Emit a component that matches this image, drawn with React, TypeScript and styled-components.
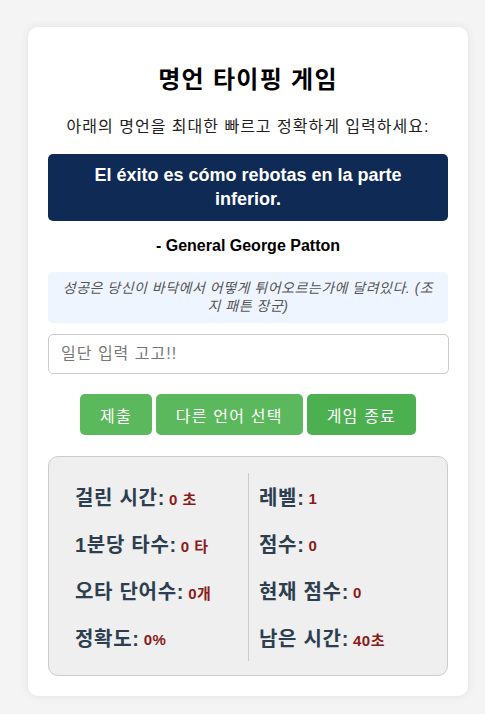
import React from "react";
import styled, { createGlobalStyle } from "styled-components";

const GlobalStyle = createGlobalStyle`
  html, body { margin: 0; padding: 0; background: #f4f4f4; }
  body {
    font-family: "Liberation Sans", Arial, "Noto Sans CJK KR", sans-serif;
    padding: 27px 0 19px 28px;
  }
  * { box-sizing: border-box; }
`;

const Card = styled.div`
  width: 440px;
  background: #fff;
  border-radius: 10px;
  box-shadow: 0 0 10px rgba(0, 0, 0, 0.08);
  padding: 20px 20px 20px;
  text-align: center;
`;

const Title = styled.h1`
  margin: 17px 0 0;
  font-size: 24px;
  line-height: 32px;
  font-weight: bold;
  letter-spacing: 1.3px;
  color: #000;
`;

const Subtitle = styled.p`
  margin: 19px 0 0;
  font-size: 16px;
  line-height: 24px;
  letter-spacing: 1px;
  color: #222;
`;

const QuoteBox = styled.div`
  margin-top: 15px;
  background: #0f2a55;
  color: #fff;
  border-radius: 5px;
  padding: 10px 20px;
  font-size: 18px;
  font-weight: bold;
  line-height: 23.5px;
`;

const Author = styled.p`
  margin: 13px 0 0;
  font-size: 16px;
  line-height: 24px;
  font-weight: bold;
  color: #000;
`;

const Translation = styled.div`
  margin-top: 14px;
  background: #eef5ff;
  border-radius: 5px;
  padding: 8px 10px;
  font-size: 14px;
  line-height: 17.5px;
  font-style: italic;
  letter-spacing: 0.5px;
  word-break: break-all;
  color: #555;
`;

const Input = styled.input`
  display: block;
  margin-top: 11px;
  width: 401px;
  height: 40px;
  border: 1px solid #ccc;
  border-radius: 5px;
  padding: 0 12px;
  font-size: 16px;
  letter-spacing: 1px;
  font-family: inherit;
  color: #333;
  outline: none;
  &::placeholder { color: #777; }
`;

const ButtonRow = styled.div`
  margin-top: 20px;
  display: flex;
  justify-content: center;
  gap: 4px;
`;

const Button = styled.button<{ $dark?: boolean }>`
  height: 41px;
  padding: 0 20px;
  border: none;
  border-radius: 5px;
  background: ${(p) => (p.$dark ? "#4caf50" : "#5cb85c")};
  color: #fff;
  font-size: 16px;
  letter-spacing: 1.2px;
  font-family: inherit;
  cursor: pointer;
`;

const Stats = styled.div`
  margin-top: 21px;
  background: #efefef;
  border: 1px solid #ccc;
  border-radius: 10px;
  padding: 16px 0 14px;
  display: grid;
  grid-template-columns: 199px 1fr;
  text-align: left;
`;

const Column = styled.div<{ $right?: boolean }>`
  padding-left: ${(p) => (p.$right ? "10px" : "26px")};
  border-left: ${(p) => (p.$right ? "1px solid #ccc" : "none")};
`;

const Row = styled.div`
  height: 47px;
  display: flex;
  align-items: center;
  gap: 4px;
  white-space: nowrap;
`;

const Label = styled.span`
  font-size: 20px;
  font-weight: bold;
  letter-spacing: 0.7px;
  color: #2c3e50;
`;

const Value = styled.span`
  font-size: 15px;
  font-weight: bold;
  letter-spacing: 0.5px;
  color: #8b1a1a;
  padding-top: 3px;
`;

const left = [
  ["걸린 시간:", "0 초"],
  ["1분당 타수:", "0 타"],
  ["오타 단어수:", "0개"],
  ["정확도:", "0%"],
];
const right = [
  ["레벨:", "1"],
  ["점수:", "0"],
  ["현재 점수:", "0"],
  ["남은 시간:", "40초"],
];

export default function App() {
  return (
    <>
      <GlobalStyle />
      <Card>
        <Title>명언 타이핑 게임</Title>
        <Subtitle>아래의 명언을 최대한 빠르고 정확하게 입력하세요:</Subtitle>
        <QuoteBox>El éxito es cómo rebotas en la parte inferior.</QuoteBox>
        <Author>- General George Patton</Author>
        <Translation>
          성공은 당신이 바닥에서 어떻게 튀어오르는가에 달려있다. (조지 패튼 장군)
        </Translation>
        <Input placeholder="일단 입력 고고!!" />
        <ButtonRow>
          <Button>제출</Button>
          <Button>다른 언어 선택</Button>
          <Button $dark>게임 종료</Button>
        </ButtonRow>
        <Stats>
          <Column>
            {left.map(([l, v]) => (
              <Row key={l}>
                <Label>{l}</Label>
                <Value>{v}</Value>
              </Row>
            ))}
          </Column>
          <Column $right>
            {right.map(([l, v]) => (
              <Row key={l}>
                <Label>{l}</Label>
                <Value>{v}</Value>
              </Row>
            ))}
          </Column>
        </Stats>
      </Card>
    </>
  );
}
